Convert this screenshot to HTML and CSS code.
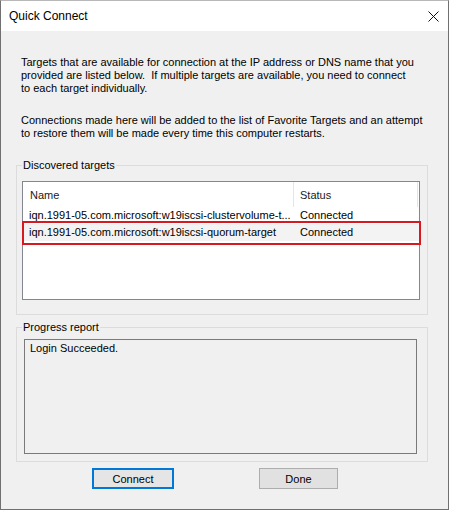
FILE: index.html
```html
<!DOCTYPE html>
<html lang="en">
<head>
<meta charset="UTF-8">
<title>Quick Connect</title>
<link rel="stylesheet" href="styles.css">
</head>
<body>
<div class="window">
    <div class="titlebar">
        <span class="title">Quick Connect</span>
        <svg class="close" width="11" height="11" viewBox="0 0 11 11">
            <path d="M0.5 0.5 L10.5 10.5 M10.5 0.5 L0.5 10.5" stroke="#111" stroke-width="1" fill="none"/>
        </svg>
    </div>
    <div class="content">
        <p class="intro">Targets that are available for connection at the IP address or DNS name that you<br>provided are listed below.&nbsp; If multiple targets are available, you need to connect<br>to each target individually.</p>
        <p class="intro">Connections made here will be added to the list of Favorite Targets and an attempt<br>to restore them will be made every time this computer restarts.</p>

        <fieldset class="group targets">
            <legend>Discovered targets</legend>
            <div class="listview">
                <div class="lv-header">
                    <div class="col-name">Name</div>
                    <div class="col-status">Status</div>
                </div>
                <div class="lv-row">
                    <div class="col-name">iqn.1991-05.com.microsoft:w19iscsi-clustervolume-t...</div>
                    <div class="col-status">Connected</div>
                </div>
                <div class="lv-row selected">
                    <div class="col-name">iqn.1991-05.com.microsoft:w19iscsi-quorum-target</div>
                    <div class="col-status">Connected</div>
                    <span class="highlight"></span>
                </div>
            </div>
        </fieldset>

        <fieldset class="group progress">
            <legend>Progress report</legend>
            <div class="report">Login Succeeded.</div>
        </fieldset>

        <div class="buttons">
            <button class="btn default">Connect</button>
            <button class="btn done">Done</button>
        </div>
    </div>
</div>
</body>
</html>
```

FILE: styles.css
```css
body {
    margin: 0;
    font-family: "Liberation Sans", Arial, sans-serif;
    font-size: 11px;
    color: #000;
}

.window {
    width: 449px;
    height: 510px;
    box-sizing: border-box;
    border: 1px solid #707070;
    border-top-color: #b8b8b8;
    background-color: #f0f0f0;
    display: flex;
    flex-direction: column;
}

.titlebar {
    height: 30px;
    background-color: #ffffff;
    display: flex;
    align-items: center;
    padding: 0 9px 0 8px;
}

.title {
    font-size: 12px;
    line-height: 14px;
}

.close {
    margin-left: auto;
    display: block;
}

.content {
    padding-top: 25px;
}

.intro {
    margin: 0 0 19px 20px;
    line-height: 13px;
    white-space: nowrap;
}

.intro + .intro {
    margin-bottom: 18px;
}

.group {
    margin: 0 20px 0 15px;
    border: 1px solid #dcdcdc;
    padding: 9px 7px 14px 5px;
    min-width: 0;
}

.group legend {
    padding: 0 1px;
    line-height: 14px;
}

.listview {
    height: 119px;
    box-sizing: border-box;
    border: 1px solid #828790;
    background-color: #ffffff;
}

.lv-header {
    display: flex;
    height: 25px;
    align-items: stretch;
}

.lv-header .col-name,
.lv-header .col-status {
    display: flex;
    align-items: center;
    color: #1a1a1a;
}

.lv-header .col-name {
    width: 271px;
    box-sizing: border-box;
    padding-left: 7px;
    border-right: 1px solid #e5e5e5;
}

.lv-header .col-status {
    width: 124px;
    box-sizing: border-box;
    padding-left: 6px;
    border-right: 1px solid #e5e5e5;
}

.lv-row {
    display: flex;
    height: 17px;
    line-height: 17px;
}

.lv-row .col-name {
    width: 271px;
    box-sizing: border-box;
    padding: 0 1px 0 6px;
    white-space: nowrap;
    overflow: hidden;
    text-overflow: ellipsis;
}

.lv-row .col-status {
    padding-left: 6px;
}

.lv-row.selected {
    position: relative;
    background-color: #f3f3f3;
}

.highlight {
    position: absolute;
    top: -3px;
    bottom: -4px;
    left: -1px;
    right: -2px;
    border: 2px solid #d71921;
}

.progress {
    margin-top: 5px;
    padding: 5px 7px 7px 5px;
}

.report {
    height: 115px;
    box-sizing: border-box;
    margin: 0 3px 0 2px;
    border: 1px solid #7a7a7a;
    background-color: #f0f0f0;
    padding: 2px 5px;
    line-height: 13px;
}

.buttons {
    display: flex;
    gap: 85px;
    padding-left: 91px;
    margin-top: 6px;
}

.btn {
    height: 21px;
    box-sizing: border-box;
    font-family: "Liberation Sans", Arial, sans-serif;
    font-size: 11px;
    color: #000;
    background-color: #e1e1e1;
    border: 1px solid #adadad;
    padding: 0;
}

.btn.default {
    width: 82px;
    border: 2px solid #0078d7;
    background-color: #e5e5e5;
}

.btn.done {
    width: 79px;
}
```
